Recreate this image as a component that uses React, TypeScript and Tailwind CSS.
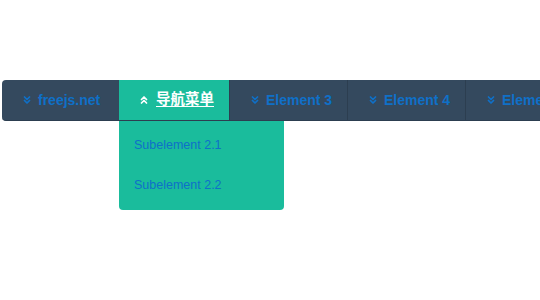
import { ChevronsDown, ChevronsUp } from "lucide-react";

const ITEMS = [
  { label: "freejs.net", w: "w-[117px]" },
  { label: "导航菜单", w: "w-[110px]", active: true },
  { label: "Element 3", w: "w-[118px]" },
  { label: "Element 4", w: "w-[118px]" },
  { label: "Element 5", w: "w-[118px]" },
];

export default function App() {
  return (
    <div
      className="h-[300px] w-[540px] overflow-hidden bg-white pt-[80px] pl-[2px]"
      style={{ fontFamily: '"Liberation Sans", "Noto Sans CJK SC", sans-serif' }}
    >
      <ul className="flex h-[41px] w-[600px] rounded-l-[4px] border-b border-[#2c3e50] bg-[#34495e]">
        {ITEMS.map((item, i) => (
          <li
            key={item.label}
            className={`relative flex shrink-0 items-center ${item.w} ${
              item.active ? "bg-[#1abc9c]" : i > 1 ? "border-l border-[#2c3e50]" : ""
            } ${i === 0 ? "rounded-l-[4px]" : ""} pl-[19px]`}
          >
            {item.active ? (
              <ChevronsUp size={12} strokeWidth={3.5} className="mr-[6px] text-white" />
            ) : (
              <ChevronsDown size={12} strokeWidth={3.5} className="mr-[5px] text-[#0f70c8]" />
            )}
            <span
              className={`whitespace-nowrap font-bold ${
                item.active
                  ? "text-[14.5px] text-white underline underline-offset-2"
                  : "text-[14px] text-[#0f70c8]"
              }`}
            >
              {item.label}
            </span>
            {item.active && (
              <ul className="absolute top-[41px] left-0 z-10 w-[165px] rounded-b-[4px] bg-[#1abc9c] pt-[4px] pb-[5px]">
                <li className="flex h-[40px] items-center pl-[15px] text-[12.5px] text-[#0f70c8]">Subelement 2.1</li>
                <li className="flex h-[40px] items-center pl-[15px] text-[12.5px] text-[#0f70c8]">Subelement 2.2</li>
              </ul>
            )}
          </li>
        ))}
      </ul>
    </div>
  );
}
